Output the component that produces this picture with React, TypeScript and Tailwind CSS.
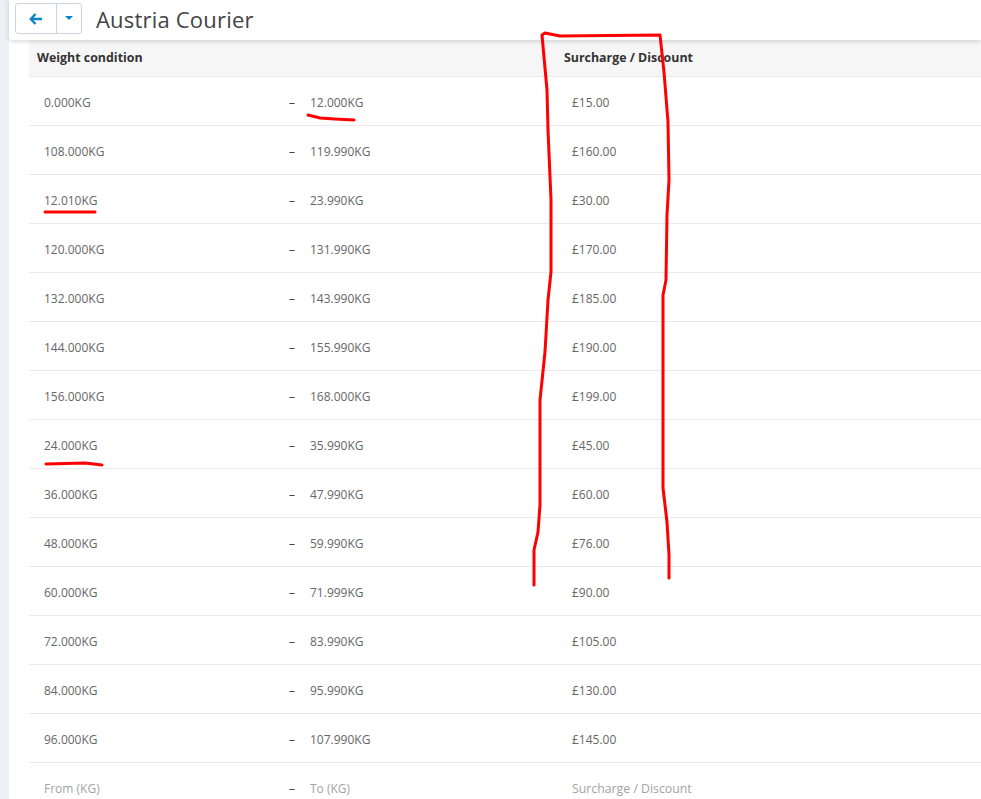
import React from "react";

const rows = [
  ["0.000KG", "12.000KG", "£15.00"],
  ["108.000KG", "119.990KG", "£160.00"],
  ["12.010KG", "23.990KG", "£30.00"],
  ["120.000KG", "131.990KG", "£170.00"],
  ["132.000KG", "143.990KG", "£185.00"],
  ["144.000KG", "155.990KG", "£190.00"],
  ["156.000KG", "168.000KG", "£199.00"],
  ["24.000KG", "35.990KG", "£45.00"],
  ["36.000KG", "47.990KG", "£60.00"],
  ["48.000KG", "59.990KG", "£76.00"],
  ["60.000KG", "71.999KG", "£90.00"],
  ["72.000KG", "83.990KG", "£105.00"],
  ["84.000KG", "95.990KG", "£130.00"],
  ["96.000KG", "107.990KG", "£145.00"],
];

function Row({ from, to, price, muted }: { from: string; to: string; price: string; muted?: boolean }) {
  const tone = muted ? "text-[#a3a3a3]" : "text-[#666666]";
  return (
    <div className="flex h-[49px] items-center border-b border-[#eaeaea] pt-[4px] text-[12px]">
      <div className={`w-[260px] pl-[15px] ${tone}`}>{from}</div>
      <div className="w-[21px] text-[#444444]">–</div>
      <div className={`w-[262px] ${tone}`}>{to}</div>
      <div className={muted ? "text-[12.3px] text-[#a3a3a3]" : tone}>{price}</div>
    </div>
  );
}

export default function App() {
  return (
    <div className="relative h-[799px] w-[981px] overflow-hidden bg-white font-['Open_Sans',sans-serif]">
      <div className="flex h-full">
        <div className="w-[9px] shrink-0 bg-[#edf1f4]" />
        <div className="flex min-w-0 flex-1 flex-col">
          <div className="relative z-10 flex h-[40px] shrink-0 items-center rounded-bl-[4px] bg-white pl-[6px] shadow-[0_1px_5px_rgba(0,0,0,0.18)]">
            <div className="mb-[3px] flex h-[31px] w-[67px] rounded-[3px] border border-[#c9d6e2] bg-white">
              <div className="flex w-[41px] items-center justify-center border-r border-[#c9d6e2]">
                <svg width="14" height="12" viewBox="0 0 14 12" className="text-[#0b84c9]">
                  <path d="M6.5 1 L1.8 6 L6.5 11 M2.2 6 H13" fill="none" stroke="currentColor" strokeWidth="2.4" />
                </svg>
              </div>
              <div className="flex flex-1 items-center justify-center pb-[1px]">
                <svg width="8" height="4" viewBox="0 0 8 4"><path d="M0 0 H8 L4 4 Z" fill="#0b84c9" /></svg>
              </div>
            </div>
            <h1 className="mb-[3px] ml-[14px] text-[22px] leading-none font-normal tracking-[0.2px] text-[#444444]">Austria Courier</h1>
          </div>
          <div className="ml-[20px] flex flex-col">
            <div className="flex h-[37px] items-center border-b border-[#eaeaea] bg-[#f6f6f6] text-[12.4px] font-bold text-[#333333]">
              <div className="w-[535px] pl-[8px]">Weight condition</div>
              <div>Surcharge / Discount</div>
            </div>
            {rows.map((r) => (
              <Row key={r[0]} from={r[0]} to={r[1]} price={r[2]} />
            ))}
            <Row from="From (KG)" to="To (KG)" price="Surcharge / Discount" muted />
          </div>
        </div>
      </div>
      <svg className="absolute top-0 left-0 z-20" width="981" height="799" fill="none" stroke="#ff0000" strokeWidth="3" strokeLinejoin="round" strokeLinecap="round">
        <path d="M534 585 L534 550 L538 532 L540 505 L540 400 L545 352 L548 300 L551 272 L551 200 L548 130 L547 90 L542 35 L545 33 L560 36 L660 35 L664 72 L668 122 L669 180 L667 215 L666 280 L663 295 L663 488 L667 522 L669 555 L669 578" />
        <path d="M308 115 L320 118 L335 119 L354 120" />
        <path d="M45 212 L95 212" />
        <path d="M46 464 L85 463 L102 465" />
      </svg>
    </div>
  );
}
